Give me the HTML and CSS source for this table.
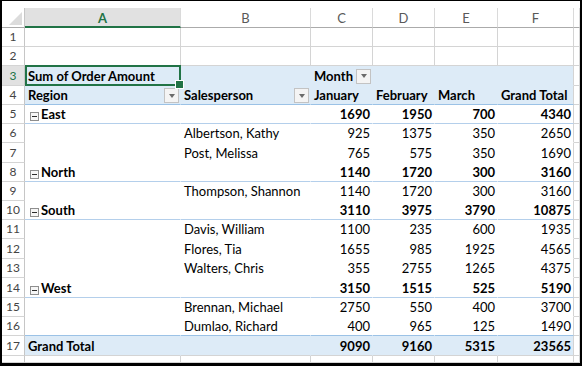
FILE: index.html
```html
<!DOCTYPE html>
<html>
<head>
<meta charset="utf-8">
<link rel="stylesheet" href="styles.css">
</head>
<body>
<div class="frame">
  <div class="sheet">
    <div class="row">
      <div class="corner"></div>
      <div class="ch sel">A</div><div class="ch">B</div><div class="ch">C</div><div class="ch">D</div><div class="ch">E</div><div class="ch">F</div><div class="ch"></div>
    </div>
    <div class="row">
      <div class="rh">1</div><div class="c"></div><div class="c"></div><div class="c"></div><div class="c"></div><div class="c"></div><div class="c"></div><div class="c"></div>
    </div>
    <div class="row">
      <div class="rh">2</div><div class="c"></div><div class="c"></div><div class="c"></div><div class="c"></div><div class="c"></div><div class="c"></div><div class="c"></div>
    </div>
    <div class="row">
      <div class="rh sel">3</div>
      <div class="c hd selcell">Sum of Order Amount</div>
      <div class="c hd"></div>
      <div class="c hd btn">Month<span class="dd"></span></div>
      <div class="c hd"></div><div class="c hd"></div><div class="c hd f"></div><div class="c"></div>
    </div>
    <div class="row">
      <div class="rh">4</div>
      <div class="c hd hsep btn">Region<span class="dd"></span></div>
      <div class="c hd hsep btn">Salesperson<span class="dd"></span></div>
      <div class="c hd hsep">January</div>
      <div class="c hd hsep">February</div>
      <div class="c hd hsep">March</div>
      <div class="c hd hsep f">Grand Total</div>
      <div class="c"></div>
    </div>
    <div class="row">
      <div class="rh">5</div>
      <div class="c pv b sep"><span class="tog"><svg width="9" height="9" viewBox="0 0 9 9"><rect x="0.5" y="0.5" width="8" height="8" fill="#f6f6f6" stroke="#8e8e8e"/><path d="M2 4.5h5" stroke="#2b2b2b"/></svg></span>East</div>
      <div class="c pv sep"></div>
      <div class="c pv b sep n">1690</div><div class="c pv b sep n">1950</div><div class="c pv b sep n">700</div><div class="c pv b sep n f">4340</div>
      <div class="c"></div>
    </div>
    <div class="row">
      <div class="rh">6</div>
      <div class="c pv"></div><div class="c pv">Albertson, Kathy</div>
      <div class="c pv n">925</div><div class="c pv n">1375</div><div class="c pv n">350</div><div class="c pv n f">2650</div>
      <div class="c"></div>
    </div>
    <div class="row">
      <div class="rh">7</div>
      <div class="c pv"></div><div class="c pv">Post, Melissa</div>
      <div class="c pv n">765</div><div class="c pv n">575</div><div class="c pv n">350</div><div class="c pv n f">1690</div>
      <div class="c"></div>
    </div>
    <div class="row">
      <div class="rh">8</div>
      <div class="c pv b sep"><span class="tog"><svg width="9" height="9" viewBox="0 0 9 9"><rect x="0.5" y="0.5" width="8" height="8" fill="#f6f6f6" stroke="#8e8e8e"/><path d="M2 4.5h5" stroke="#2b2b2b"/></svg></span>North</div>
      <div class="c pv sep"></div>
      <div class="c pv b sep n">1140</div><div class="c pv b sep n">1720</div><div class="c pv b sep n">300</div><div class="c pv b sep n f">3160</div>
      <div class="c"></div>
    </div>
    <div class="row">
      <div class="rh">9</div>
      <div class="c pv"></div><div class="c pv">Thompson, Shannon</div>
      <div class="c pv n">1140</div><div class="c pv n">1720</div><div class="c pv n">300</div><div class="c pv n f">3160</div>
      <div class="c"></div>
    </div>
    <div class="row">
      <div class="rh">10</div>
      <div class="c pv b sep"><span class="tog"><svg width="9" height="9" viewBox="0 0 9 9"><rect x="0.5" y="0.5" width="8" height="8" fill="#f6f6f6" stroke="#8e8e8e"/><path d="M2 4.5h5" stroke="#2b2b2b"/></svg></span>South</div>
      <div class="c pv sep"></div>
      <div class="c pv b sep n">3110</div><div class="c pv b sep n">3975</div><div class="c pv b sep n">3790</div><div class="c pv b sep n f">10875</div>
      <div class="c"></div>
    </div>
    <div class="row">
      <div class="rh">11</div>
      <div class="c pv"></div><div class="c pv">Davis, William</div>
      <div class="c pv n">1100</div><div class="c pv n">235</div><div class="c pv n">600</div><div class="c pv n f">1935</div>
      <div class="c"></div>
    </div>
    <div class="row">
      <div class="rh">12</div>
      <div class="c pv"></div><div class="c pv">Flores, Tia</div>
      <div class="c pv n">1655</div><div class="c pv n">985</div><div class="c pv n">1925</div><div class="c pv n f">4565</div>
      <div class="c"></div>
    </div>
    <div class="row">
      <div class="rh">13</div>
      <div class="c pv"></div><div class="c pv">Walters, Chris</div>
      <div class="c pv n">355</div><div class="c pv n">2755</div><div class="c pv n">1265</div><div class="c pv n f">4375</div>
      <div class="c"></div>
    </div>
    <div class="row">
      <div class="rh">14</div>
      <div class="c pv b sep"><span class="tog"><svg width="9" height="9" viewBox="0 0 9 9"><rect x="0.5" y="0.5" width="8" height="8" fill="#f6f6f6" stroke="#8e8e8e"/><path d="M2 4.5h5" stroke="#2b2b2b"/></svg></span>West</div>
      <div class="c pv sep"></div>
      <div class="c pv b sep n">3150</div><div class="c pv b sep n">1515</div><div class="c pv b sep n">525</div><div class="c pv b sep n f">5190</div>
      <div class="c"></div>
    </div>
    <div class="row">
      <div class="rh">15</div>
      <div class="c pv"></div><div class="c pv">Brennan, Michael</div>
      <div class="c pv n">2750</div><div class="c pv n">550</div><div class="c pv n">400</div><div class="c pv n f">3700</div>
      <div class="c"></div>
    </div>
    <div class="row">
      <div class="rh">16</div>
      <div class="c pv hsep"></div><div class="c pv hsep">Dumlao, Richard</div>
      <div class="c pv hsep n">400</div><div class="c pv hsep n">965</div><div class="c pv hsep n">125</div><div class="c pv hsep n f">1490</div>
      <div class="c"></div>
    </div>
    <div class="row">
      <div class="rh">17</div>
      <div class="c hd tot">Grand Total</div><div class="c hd tot"></div>
      <div class="c hd tot n">9090</div><div class="c hd tot n">9160</div><div class="c hd tot n">5315</div><div class="c hd tot n f">23565</div>
      <div class="c"></div>
    </div>
    <div class="row">
      <div class="rh"></div><div class="c"></div><div class="c"></div><div class="c"></div><div class="c"></div><div class="c"></div><div class="c"></div><div class="c"></div>
    </div>
  </div>
</div>
</body>
</html>
```

FILE: styles.css
```css
* { box-sizing: border-box; margin: 0; padding: 0; }
html, body { width: 582px; height: 366px; overflow: hidden; background: #000; }
body { font-family: Lato, "Noto Sans", sans-serif; font-size: 13px; color: #000; }

.frame {
  width: 582px; height: 366px;
  border-style: solid; border-color: #000; border-width: 1px 2px 3px 2px;
  padding-top: 7px; background: #fff; overflow: hidden;
}
.sheet {
  display: grid;
  grid-template-columns: 23px 156px 130px 62px 62px 63px 76px 6px;
  grid-template-rows: 20px 19px 19px 20px 19px 19px 19px 20px 19px 19px 19px 19px 20px 19px 20px 19px 19px 20px 7px;
}
.row { display: contents; }

.corner { position: relative; border-right: 1px solid #c6c6c6; border-bottom: 1px solid #ababab; }
.corner::after {
  content: ""; position: absolute; right: 2px; bottom: 2px; width: 13px; height: 13px;
  background: #dcdcdc; clip-path: polygon(100% 0, 100% 100%, 0 100%);
}
.ch {
  display: flex; align-items: center; justify-content: center; padding-top: 1px;
  border-right: 1px solid #dadada; border-bottom: 1px solid #ababab;
  color: #595959; font-size: 13px;
}
.ch.sel { background: #e1e1e1; color: #217346; font-weight: bold; border-bottom: 2px solid #217346; padding-top: 2px; }

.rh {
  display: flex; align-items: flex-end; justify-content: center; padding-bottom: 1px; line-height: 16px;
  border-right: 1px solid #c6c6c6; border-bottom: 1px solid #d4d4d4;
  color: #444; font-size: 12px;
}
.rh.sel { background: #e1e1e1; color: #217346; }

.c {
  display: flex; align-items: flex-end; padding: 0 2px 1px 3px; line-height: 16px; white-space: nowrap;
  border-right: 1px solid #d4d4d4; border-bottom: 1px solid #d4d4d4;
}
.pv { background: #fff; border-right-color: #fff; border-bottom-color: #fff; }
.hd { background: #ddebf7; border-right-color: #ddebf7; border-bottom-color: #ddebf7; font-weight: bold; }
.b { font-weight: bold; }
.sep { border-bottom-color: #b4cfeb; }
.hsep { border-bottom-color: #9bc2e6; }
.tot { border-bottom-color: #d4d4d4; }
.f { border-right-color: #d4d4d4; }
.n { justify-content: flex-end; padding-right: 2px; }
.btn { padding-right: 1px; }

.dd {
  margin-left: auto; margin-top: 2px; align-self: center;
  width: 15px; height: 15px; flex: none;
  border: 1px solid #c3c3c3; background: #f4f4f4;
  display: flex; align-items: center; justify-content: center;
}
.dd::after {
  content: ""; width: 0; height: 0;
  border-left: 3.5px solid transparent; border-right: 3.5px solid transparent; border-top: 4px solid #6b6b6b;
}

.tog { display: flex; flex: none; width: 9px; height: 9px; margin: 0 2px 1px 2px; align-self: flex-end; }

.selcell { position: relative; }
.selcell::before {
  content: ""; position: absolute; left: 0; top: -1px; right: -1px; bottom: -1px;
  border: 2px solid #217346; pointer-events: none;
}
.selcell::after {
  content: ""; position: absolute; right: -4px; bottom: -4px; width: 7px; height: 7px;
  background: #217346; border: 1px solid #fff; z-index: 2;
}
```
